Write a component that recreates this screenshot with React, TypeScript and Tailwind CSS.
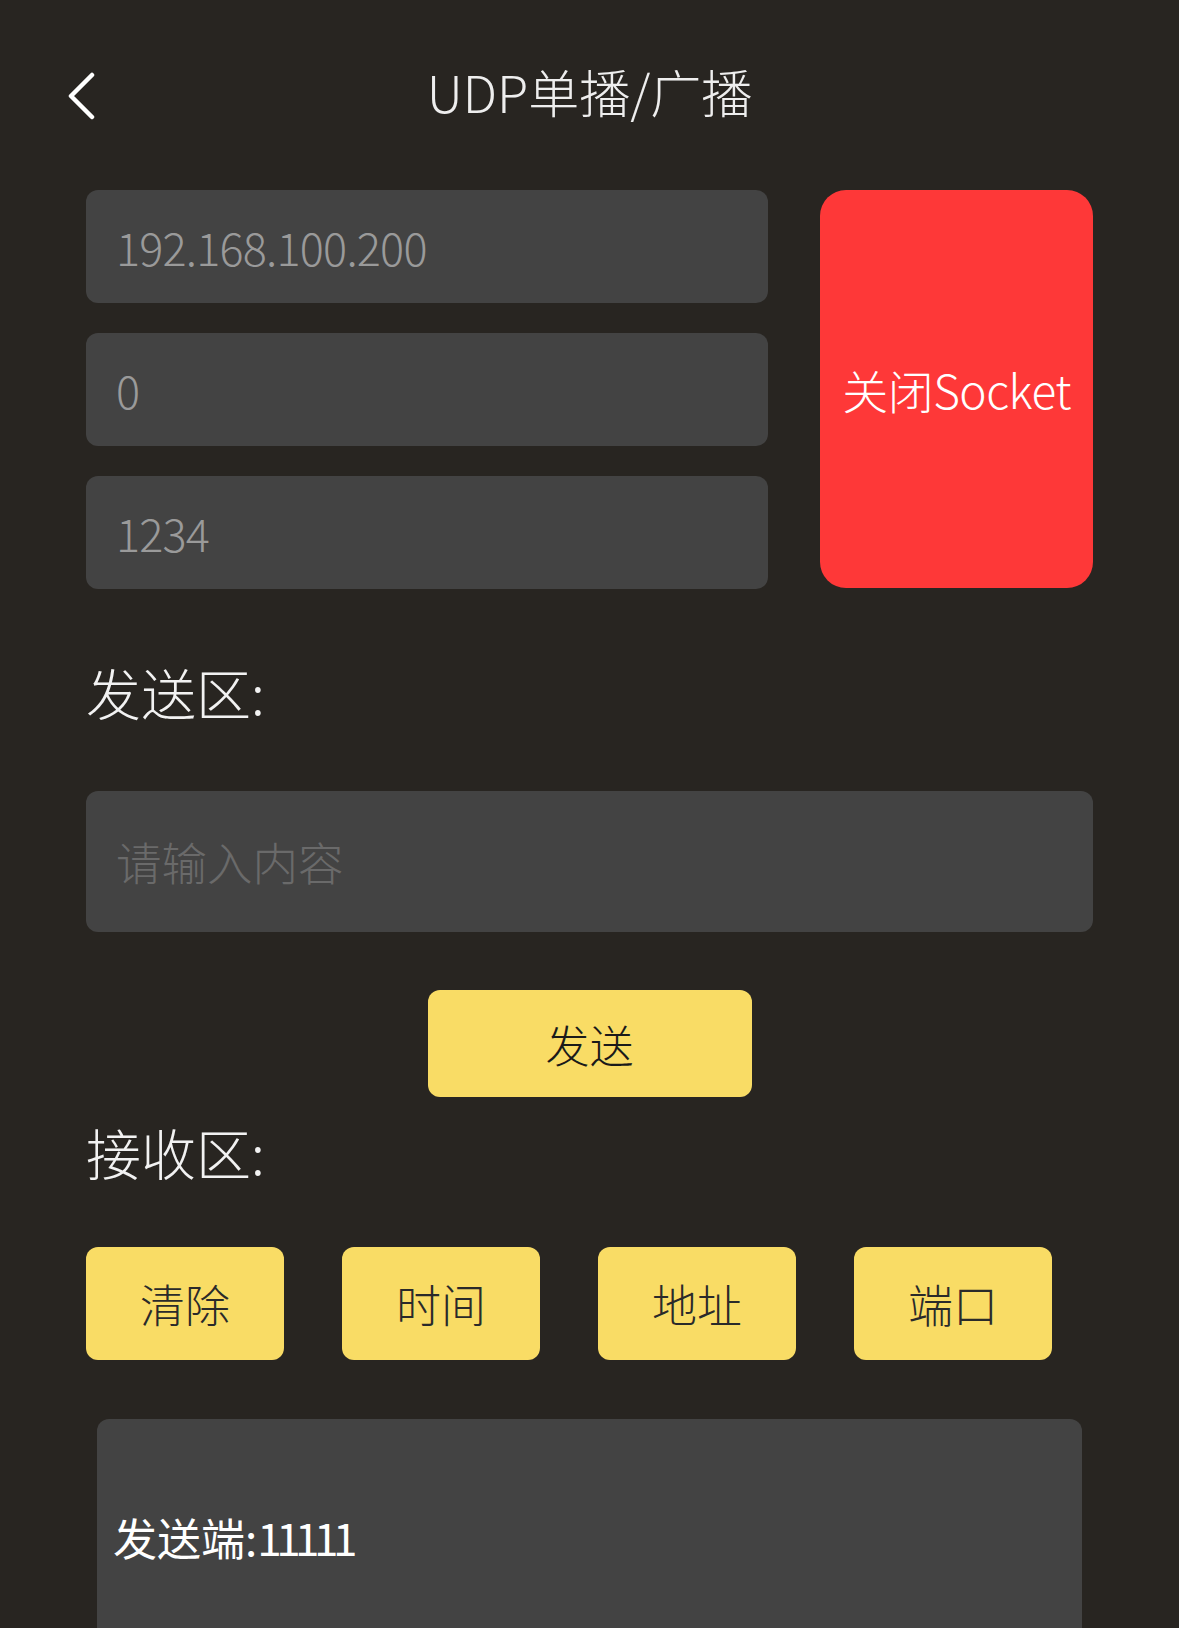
import React from "react";

export default function App() {
  return (
    <div
      className="w-[1179px] h-[1628px] overflow-hidden bg-[#282521] text-white font-['Noto_Sans_CJK_SC',_'Noto_Sans',_sans-serif]"
    >
      {/* Header */}
      <div className="relative h-[190px] flex items-center justify-center">
        <button className="absolute left-[64px] top-[70px] w-[36px] h-[52px] flex items-center justify-center">
          <svg width="32" height="48" viewBox="0 0 32 48" fill="none">
            <path d="M26 3 L5 24 L26 45" stroke="#ffffff" strokeWidth="4.5" strokeLinecap="round" strokeLinejoin="round" />
          </svg>
        </button>
        <h1 className="-mt-[8px] text-[51px] font-extralight text-[#eeeeee] leading-none">UDP单播/广播</h1>
      </div>

      {/* Connection section */}
      <div className="flex px-[86px] gap-[52px]">
        <div className="flex flex-col gap-[30px] w-[682px]">
          {["192.168.100.200", "0", "1234"].map((v) => (
            <div key={v} className="h-[113px] rounded-[12px] bg-[#434343] flex items-center px-[30px]">
              <span className="text-[45px] font-extralight text-[#9a9a9a] leading-none tracking-[-0.8px]">{v}</span>
            </div>
          ))}
        </div>
        <button className="flex-1 h-[398px] rounded-[26px] bg-[#fe3838] flex items-center justify-center">
          <span className="text-[46px] font-light text-white leading-none tracking-[-0.5px]">关闭Socket</span>
        </button>
      </div>

      {/* Send area */}
      <div className="px-[86px] mt-[74px]">
        <div className="text-[55px] font-extralight text-[#f2f2f2] leading-[56px]">发送区:</div>
        <div className="mt-[72px] h-[141px] rounded-[12px] bg-[#434343] flex items-center px-[30px]">
          <span className="text-[45.5px] font-extralight text-[#6a6a6a] leading-none">请输入内容</span>
        </div>
        <div className="flex justify-center mt-[58px]">
          <button className="w-[324px] h-[107px] rounded-[12px] bg-[#f9dc65] flex items-center justify-center">
            <span className="text-[44px] font-light text-[#1a1a1a] leading-none">发送</span>
          </button>
        </div>
      </div>

      {/* Receive area */}
      <div className="px-[86px] mt-[24px]">
        <div className="text-[55px] font-extralight text-[#f2f2f2] leading-[60px]">接收区:</div>
        <div className="mt-[66px] flex gap-[58px]">
          {["清除", "时间", "地址", "端口"].map((t) => (
            <button key={t} className="w-[198px] h-[113px] rounded-[12px] bg-[#f9dc65] flex items-center justify-center">
              <span className="text-[45px] font-extralight text-[#2a2a2a] leading-none">{t}</span>
            </button>
          ))}
        </div>
      </div>

      <div className="ml-[97px] w-[985px] mt-[59px] h-[260px] rounded-t-[12px] bg-[#434343] pt-[96px] px-[16px]">
        <span className="text-[44px] font-normal text-white leading-none">
          发送端:<span className="tracking-[-5.5px]">11111</span>
        </span>
      </div>
    </div>
  );
}
